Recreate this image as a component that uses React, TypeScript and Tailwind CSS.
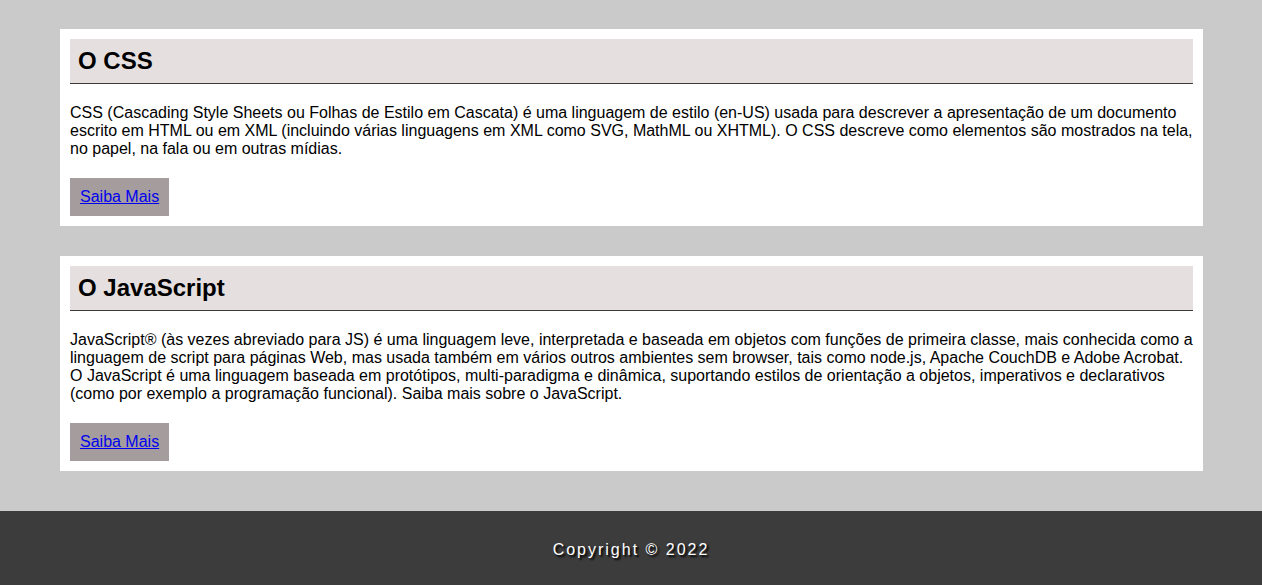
const sections = [
  {
    title: 'O CSS',
    text: 'CSS (Cascading Style Sheets ou Folhas de Estilo em Cascata) é uma linguagem de estilo (en-US) usada para descrever a apresentação de um documento escrito em HTML ou em XML (incluindo várias linguagens em XML como SVG, MathML ou XHTML). O CSS descreve como elementos são mostrados na tela, no papel, na fala ou em outras mídias.',
  },
  {
    title: 'O JavaScript',
    text: 'JavaScript® (às vezes abreviado para JS) é uma linguagem leve, interpretada e baseada em objetos com funções de primeira classe, mais conhecida como a linguagem de script para páginas Web, mas usada também em vários outros ambientes sem browser, tais como node.js, Apache CouchDB e Adobe Acrobat. O JavaScript é uma linguagem baseada em protótipos, multi-paradigma e dinâmica, suportando estilos de orientação a objetos, imperativos e declarativos (como por exemplo a programação funcional). Saiba mais sobre o JavaScript.',
  },
];

function Card({ title, text }: { title: string; text: string }) {
  return (
    <section className="bg-white p-[10px]">
      <h2 className="bg-[#e5dfdf] border-b border-[#3b3b3b] px-[8px] py-[8px] text-[24px] font-bold leading-[28px] text-black">
        {title}
      </h2>
      <p className="mt-[20px] text-[16px] leading-[18px] text-black">{text}</p>
      <div className="mt-[20px]">
        <a href="#" className="inline-block bg-[#a59d9d] px-[10px] py-[10px] text-[16px] leading-[18px] text-[#0000ee] underline">
          Saiba Mais
        </a>
      </div>
    </section>
  );
}

export default function App() {
  return (
    <div className="min-h-screen bg-[#cacaca] font-['Liberation_Sans',Arial,sans-serif]">
      <main className="flex flex-col gap-[30px] pl-[60px] pr-[59px] pt-[29px] pb-[40px]">
        {sections.map((s) => (
          <Card key={s.title} title={s.title} text={s.text} />
        ))}
      </main>
      <footer className="bg-[#3c3c3c] pt-[30px] pb-[26px] text-center">
        <p className="text-[16px] leading-[18px] tracking-[2px] text-white [text-shadow:2px_2px_2px_#000]">
          Copyright © 2022
        </p>
      </footer>
    </div>
  );
}
